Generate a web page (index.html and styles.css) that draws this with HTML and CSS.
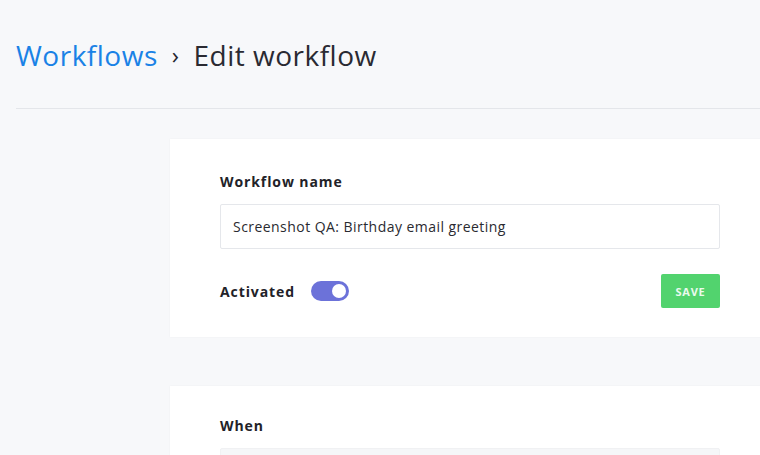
FILE: index.html
```html
<!DOCTYPE html>
<html>
<head>
<meta charset="utf-8">
<link rel="stylesheet" href="styles.css">
</head>
<body>
<div class="page">
  <header class="header">
    <h1 class="crumbs"><span class="crumb-link">Workflows</span><span class="sep">›</span><span class="crumb-current">Edit workflow</span></h1>
  </header>
  <main class="main">
    <section class="card card-top">
      <label class="label">Workflow name</label>
      <div class="input">Screenshot QA: Birthday email greeting</div>
      <div class="row">
        <div class="activated">
          <span class="label-inline">Activated</span>
          <span class="toggle"><span class="knob"></span></span>
        </div>
        <button class="save">SAVE</button>
      </div>
    </section>
    <section class="card card-when">
      <label class="label">When</label>
      <div class="input input-grey"></div>
    </section>
  </main>
</div>
</body>
</html>
```
FILE: styles.css
```css
html, body { margin: 0; padding: 0; }
body {
  background: #f7f8fa;
  font-family: "Open Sans", "DejaVu Sans", sans-serif;
  color: #26262e;
}
.page {
  width: 760px;
  height: 455px;
  overflow: hidden;
}
.header {
  margin-left: 16px;
  height: 108px;
  border-bottom: 1px solid #e4e6ea;
  display: flex;
  align-items: flex-start;
}
.crumbs {
  margin: 35px 0 0 0;
  font-weight: 400;
  font-size: 28px;
  line-height: 40px;
  display: flex;
  align-items: center;
  letter-spacing: 0.5px;
}
.crumb-link { color: #1a82e6; }
.sep { font-size: 24px; margin: 0 14px; color: #26262e; }
.crumb-current { color: #2a2a32; }
.main {
  padding: 30px 0 0 170px;
  display: flex;
  flex-direction: column;
  gap: 49px;
}
.card {
  width: 500px;
  flex-shrink: 0;
  background: #ffffff;
  padding: 0 50px;
  box-shadow: 0 0 2px rgba(0,0,0,0.04);
}
.card-top { padding-top: 33px; height: 165px; }
.card-when { padding-top: 30px; height: 80px; }
.label {
  display: block;
  font-weight: 700;
  font-size: 14px;
  line-height: 20px;
  color: #222228;
  letter-spacing: 0.9px;
  margin-bottom: 12px;
}
.input {
  border: 1px solid #e5e7eb;
  border-radius: 2px;
  box-sizing: border-box;
  height: 45px;
  padding: 0 12px;
  display: flex;
  align-items: center;
  font-size: 14px;
  letter-spacing: 0.45px;
  color: #2a2a30;
}
.input-grey { background: #f5f6f8; border-color: #f0f1f3; }
.row {
  margin-top: 25px;
  display: flex;
  align-items: center;
  justify-content: space-between;
}
.activated { display: flex; align-items: center; gap: 16px; }
.label-inline { font-weight: 700; font-size: 14px; color: #222228; letter-spacing: 0.9px; }
.toggle {
  width: 38px;
  height: 20px;
  border-radius: 10px;
  background: #6c72d9;
  position: relative;
  display: inline-block;
}
.knob {
  position: absolute;
  right: 3px;
  top: 3px;
  width: 14px;
  height: 14px;
  border-radius: 50%;
  background: #fff;
}
.save {
  width: 59px;
  height: 34px;
  border: none;
  border-radius: 2px;
  background: #52d36e;
  color: #eafaee;
  font-family: inherit;
  font-weight: 700;
  font-size: 11px;
  letter-spacing: 0.8px;
  padding: 0;
}
```
